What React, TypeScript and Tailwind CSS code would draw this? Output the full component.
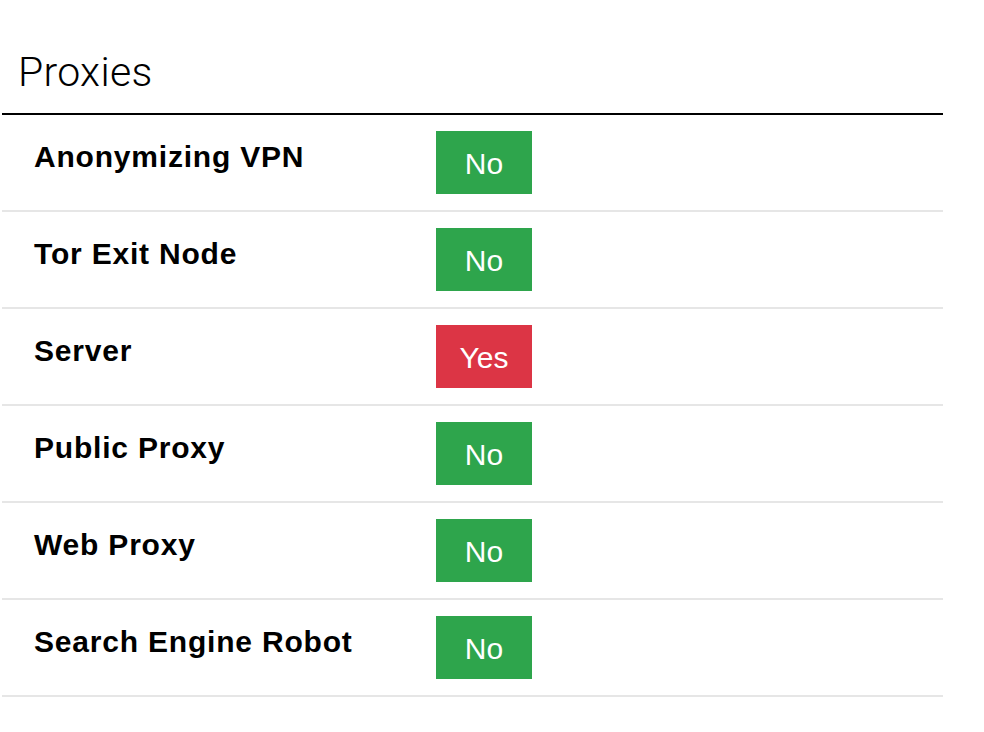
import React from "react";

const rows: { label: string; yes: boolean }[] = [
  { label: "Anonymizing VPN", yes: false },
  { label: "Tor Exit Node", yes: false },
  { label: "Server", yes: true },
  { label: "Public Proxy", yes: false },
  { label: "Web Proxy", yes: false },
  { label: "Search Engine Robot", yes: false },
];

export default function App() {
  return (
    <div className="w-[984px] h-[732px] bg-white" style={{ fontFamily: '"Liberation Sans", Arial, sans-serif' }}>
      <div className="ml-[2px] w-[941px] pt-[48px]">
        <h2
          className="pl-[16px] text-[41px] font-light leading-[48px] text-black pb-[17px] tracking-[0.3px]"
          style={{ fontFamily: 'Roboto, "Liberation Sans", sans-serif' }}
        >
          Proxies
        </h2>
        <div className="h-[2px] bg-black" />
        {rows.map((r) => (
          <div key={r.label} className="flex border-b-2 border-[#e6e6e6] h-[97px]">
            <div className="w-[402px] pl-[32px] pt-[24px] text-[30px] font-bold leading-[36px] tracking-[0.8px] text-black">
              {r.label}
            </div>
            <div className="pl-[32px] pt-[16px]">
              <div
                className={`w-[96px] h-[63px] flex items-center justify-center text-white text-[30px] pt-[2px] ${
                  r.yes ? "bg-[#dc3545]" : "bg-[#2ea54c]"
                }`}
              >
                {r.yes ? "Yes" : "No"}
              </div>
            </div>
          </div>
        ))}
      </div>
    </div>
  );
}
